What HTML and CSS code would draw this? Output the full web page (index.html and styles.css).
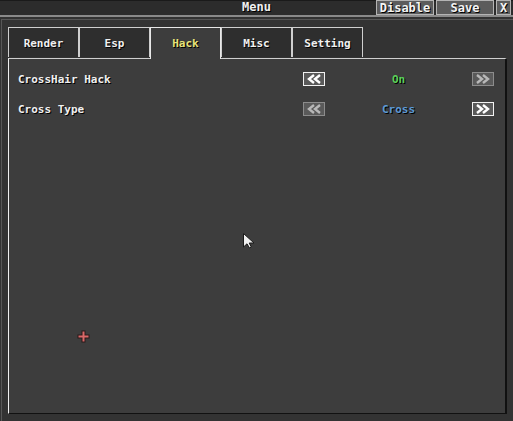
FILE: index.html
```html
<!DOCTYPE html>
<html>
<head>
<meta charset="utf-8">
<link rel="stylesheet" href="styles.css">
</head>
<body>
<div class="page">
  <header class="titlebar">
    <div class="spacer"></div>
    <div class="title">Menu</div>
    <div class="actions">
      <button class="tbtn wide">Disable</button>
      <button class="tbtn wide">Save</button>
      <button class="tbtn close">X</button>
    </div>
  </header>
  <div class="window">
    <nav class="tabs">
      <div class="tab">Render</div>
      <div class="tab">Esp</div>
      <div class="tab active">Hack</div>
      <div class="tab">Misc</div>
      <div class="tab">Setting</div>
    </nav>
    <section class="panel">
      <div class="row">
        <div class="label">CrossHair Hack</div>
        <div class="control">
          <button class="arrow lit"><svg width="16" height="10" viewBox="0 0 16 10"><polyline points="8,1 3,5 8,9" /><polyline points="14,1 9,5 14,9" /></svg></button>
          <div class="value on">On</div>
          <button class="arrow"><svg width="16" height="10" viewBox="0 0 16 10"><polyline points="2,1 7,5 2,9" /><polyline points="8,1 13,5 8,9" /></svg></button>
        </div>
      </div>
      <div class="row">
        <div class="label">Cross Type</div>
        <div class="control">
          <button class="arrow"><svg width="16" height="10" viewBox="0 0 16 10"><polyline points="8,1 3,5 8,9" /><polyline points="14,1 9,5 14,9" /></svg></button>
          <div class="value cross">Cross</div>
          <button class="arrow lit"><svg width="16" height="10" viewBox="0 0 16 10"><polyline points="2,1 7,5 2,9" /><polyline points="8,1 13,5 8,9" /></svg></button>
        </div>
      </div>
      <svg class="pointer" width="14" height="18" viewBox="0 0 14 18"><path d="M1.5 1.5 L1.5 15 L5 11.8 L7.5 16 L9.3 15 L7.2 11 L12 11 Z" fill="#f0f0f0" stroke="#1a1a1a" stroke-width="1"/></svg>
      <svg class="crosshair" width="13" height="13" viewBox="0 0 13 13"><path d="M4.5 0.5 H8.5 V4.5 H12.5 V8.5 H8.5 V12.5 H4.5 V8.5 H0.5 V4.5 H4.5 Z" fill="#2a1a1a"/><path d="M5.5 1.5 H7.5 V5.5 H11.5 V7.5 H7.5 V11.5 H5.5 V7.5 H1.5 V5.5 H5.5 Z" fill="#d96868"/></svg>
    </section>
  </div>
</div>
</body>
</html>
```

FILE: styles.css
```css
html, body {
  margin: 0;
  height: 100%;
  background: #333333;
  font-family: "DejaVu Sans Mono", "Liberation Mono", monospace;
  font-weight: bold;
  font-size: 11px;
  color: #f0f0f0;
}

.page {
  height: 100%;
  display: flex;
  flex-direction: column;
}

/* top bar with the window caption and its buttons */
.titlebar {
  height: 15px;
  display: grid;
  grid-template-columns: 1fr auto 1fr;
  align-items: stretch;
  background: #2c2c2c;
  border-bottom: 2px solid #8a8a8a;
  box-shadow: inset 0 1px 0 #1a1a1a;
}

.title {
  font-size: 12px;
  line-height: 15px;
  text-shadow: 1px 1px 0 #000;
}

.actions {
  display: flex;
  justify-content: flex-end;
  gap: 2px;
  padding-right: 2px;
}

.tbtn {
  box-sizing: border-box;
  height: 15px;
  padding: 0;
  margin: 0;
  border: 1px solid #b4b4b4;
  background: #5c5c5c;
  color: #f4f4f4;
  font: inherit;
  font-size: 12px;
  line-height: 12px;
  text-shadow: 1px 1px 0 #000;
}

.tbtn.wide { width: 58px; }
.tbtn.close { width: 15px; }

/* main window frame */
.window {
  flex: 1;
  display: flex;
  flex-direction: column;
  margin: 2px 0 0 1px;
  border-top: 1px solid #575757;
  border-left: 1px solid #575757;
  padding: 7px 6px 7px 6px;
  background: #333333;
}

.tabs {
  display: flex;
  align-items: flex-end;
  height: 31px;
  position: relative;
  z-index: 1;
}

.tab {
  box-sizing: border-box;
  width: 71px;
  height: 30px;
  border: 1px solid #cfcfcf;
  border-bottom: none;
  background: #2e2e2e;
  display: flex;
  align-items: center;
  justify-content: center;
  padding-top: 1px;
  text-shadow: 1px 1px 0 #000;
  margin-bottom: 1px;
}

.tab.active {
  height: 32px;
  margin-bottom: -1px;
  padding-top: 0;
  background: #3d3d3d;
  color: #e6e27a;
  border-color: #e8e8e8;
}

.panel {
  flex: 1;
  position: relative;
  background: #3d3d3d;
  border-top: 1px solid #cfcfcf;
  border-left: 1px solid #f0f0f0;
  border-right: 2px solid #111111;
  border-bottom: 1px solid #111111;
  padding: 13px 11px 0 9px;
}

.row {
  height: 14px;
  display: flex;
  align-items: center;
  margin-bottom: 16px;
}

.label {
  flex: 1;
  text-shadow: 1px 1px 0 #000;
}

.control {
  width: 191px;
  display: flex;
  align-items: center;
}

.arrow {
  box-sizing: border-box;
  width: 22px;
  height: 14px;
  padding: 0;
  margin: 0;
  border: 1px solid #8c8c8c;
  background: #5a5a5a;
  display: flex;
  align-items: center;
  justify-content: center;
}

.arrow polyline {
  fill: none;
  stroke: #b8b8b8;
  stroke-width: 2.4;
}

.arrow.lit {
  border-color: #f2f2f2;
}

.arrow.lit polyline {
  stroke: #ffffff;
}

.value {
  flex: 1;
  text-align: center;
  text-shadow: 1px 1px 0 #000;
}

.value.on { color: #5ad05a; }
.value.cross { color: #5c9ad6; }

/* mouse pointer and aim marker drawn over the panel */
.pointer {
  position: absolute;
  left: 233px;
  top: 173px;
}

.crosshair {
  position: absolute;
  left: 68px;
  top: 271px;
}
```
